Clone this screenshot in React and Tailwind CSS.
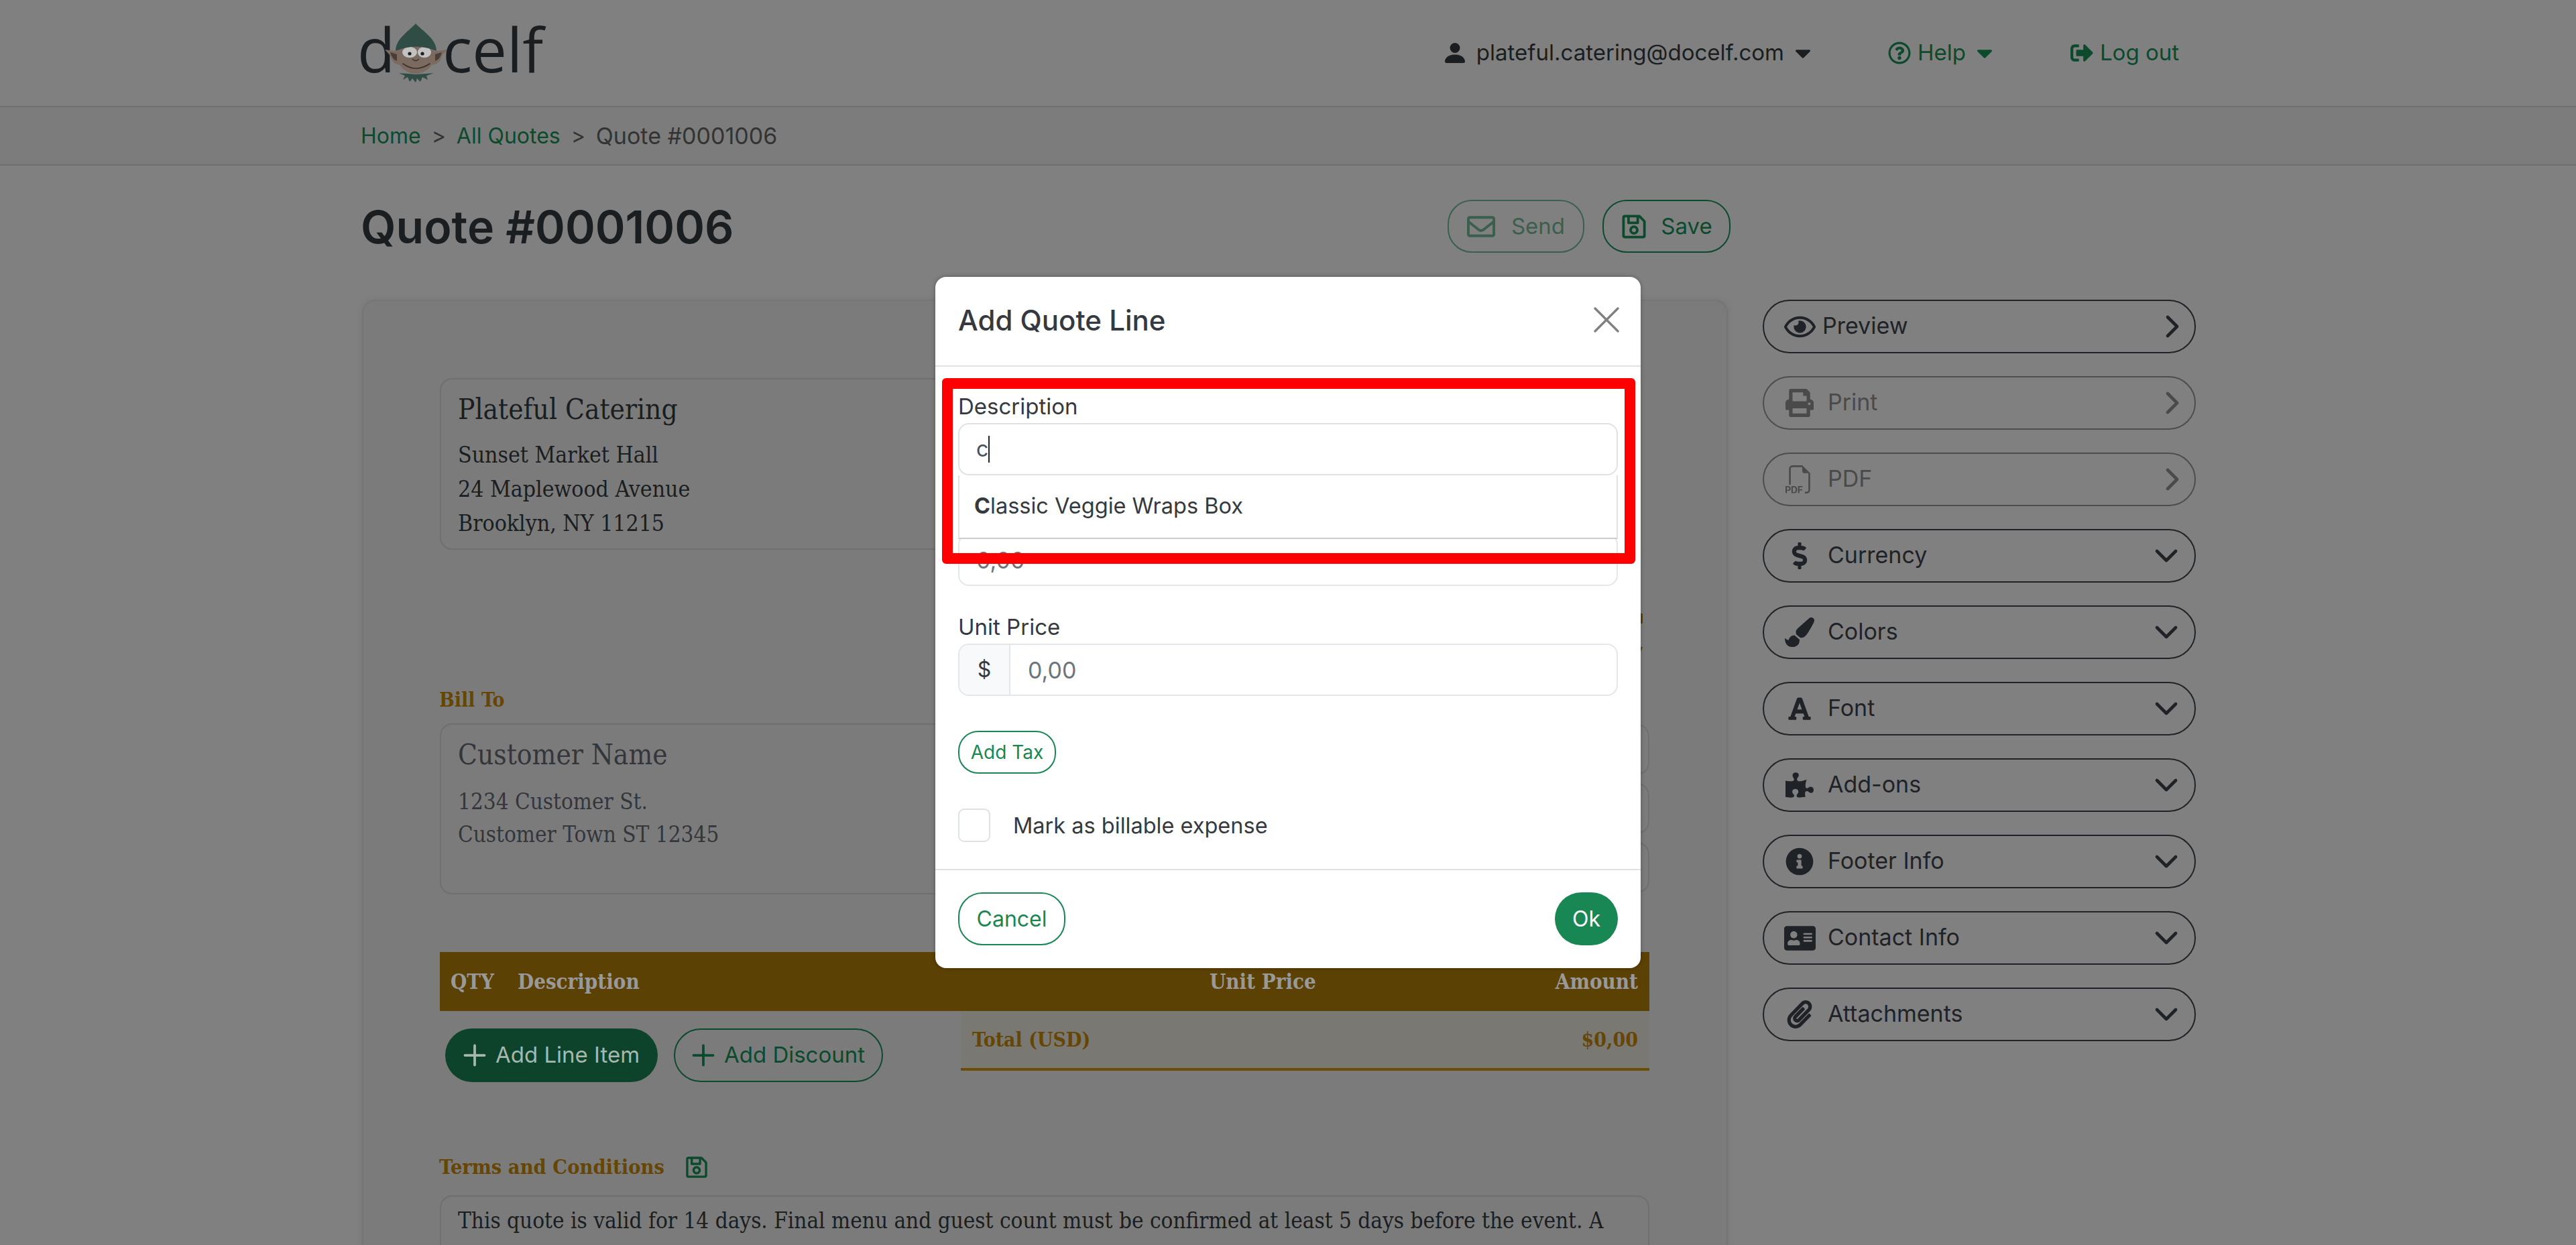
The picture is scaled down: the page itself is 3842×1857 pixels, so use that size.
import { FaCaretDown, FaDollarSign, FaFont, FaInfoCircle, FaPaintBrush, FaPaperclip, FaPrint, FaPuzzlePiece, FaAddressCard, FaRegEnvelope, FaRegEye, FaRegQuestionCircle, FaRegSave, FaSignOutAlt } from "react-icons/fa";
import { BsFiletypePdf, BsPersonFill } from "react-icons/bs";
import { ChevronDown, ChevronRight, Plus, X } from "lucide-react";

const serif = "font-['DejaVu_Serif_Condensed','DejaVu_Serif',serif]";

const sideItems = [
  { label: "Preview", icon: FaRegEye, size: 47, open: true, text: "ml-[4px]" },
  { label: "Print", icon: FaPrint, size: 42, open: true, muted: true },
  { label: "PDF", icon: BsFiletypePdf, size: 42, open: true, muted: true },
  { label: "Currency", icon: FaDollarSign, size: 40 },
  { label: "Colors", icon: FaPaintBrush, size: 44 },
  { label: "Font", icon: FaFont, size: 38 },
  { label: "Add-ons", icon: FaPuzzlePiece, size: 42 },
  { label: "Footer Info", icon: FaInfoCircle, size: 42 },
  { label: "Contact Info", icon: FaAddressCard, size: 47 },
  { label: "Attachments", icon: FaPaperclip, size: 42 },
];

const ElfLogo = () => (
  <div className="-mt-[12px] flex h-[92px] items-baseline font-['Open_Sans',sans-serif] text-[92px] leading-none text-[#1a1e21]">
    <span>d</span>
    <svg viewBox="0 0 93 88" className="-ml-[15px] -mr-[7px] mt-[8px] h-[88px] w-[93px] shrink-0 self-start">
      <path d="M0 39 L22 42 L22 62 Q10 60 8 48 Z" fill="#7a6a5f" />
      <path d="M8 43 L18 46 L18 56 Q11 54 8 43 Z" fill="#4a3d35" />
      <path d="M93 39 L71 42 L71 62 Q83 60 85 48 Z" fill="#7a6a5f" />
      <path d="M85 43 L75 46 L75 56 Q82 54 85 43 Z" fill="#4a3d35" />
      <polygon points="21,74 35,75 46,76 60,75 73,74 62,78 64,84 56,80 53,87 48,82 46,88 41,82 37,87 34,80 27,84 30,78" fill="#2f4d45" />
      <ellipse cx="46" cy="47" rx="28" ry="28" fill="#7a6a5f" />
      <ellipse cx="37" cy="43" rx="11" ry="8" fill="#c2c2c2" />
      <ellipse cx="59" cy="43" rx="10" ry="8" fill="#c2c2c2" />
      <circle cx="37" cy="45" r="2.6" fill="#1a1e21" />
      <circle cx="56" cy="45" r="2.6" fill="#1a1e21" />
      <path d="M41 53 Q46 58 51 53" stroke="#3a312c" strokeWidth="1.2" fill="none" />
      <path d="M27 60 Q46 74 67 60" stroke="#3a312c" strokeWidth="1.6" fill="none" strokeLinecap="round" />
      <path d="M46 0 C38 10 16 22 16 41 Q46 28 77 41 C77 22 54 10 46 0 Z" fill="#2f4d45" />
    </svg>
    <span>celf</span>
  </div>
);

const Header = () => (
  <header className="flex h-[160px] items-center justify-between border-b-2 border-[#6f6f6f] pl-[533px] pr-[592px]">
    <ElfLogo />
    <nav className="flex items-center text-[33px]">
      <div className="flex items-center text-[#1a1e21]">
        <BsPersonFill size={40} />
        <span className="ml-[12px]">plateful.catering@docelf.com</span>
        <FaCaretDown size={38} className="ml-[9px]" />
      </div>
      <div className="ml-[108px] flex items-center text-[#0c4a2e]">
        <FaRegQuestionCircle size={34} />
        <span className="ml-[10px]">Help</span>
        <FaCaretDown size={38} className="ml-[9px]" />
      </div>
      <div className="ml-[109px] flex items-center text-[#0c4a2e]">
        <FaSignOutAlt size={34} />
        <span className="ml-[10px]">Log out</span>
      </div>
    </nav>
  </header>
);

const Breadcrumb = () => (
  <div className="flex h-[87px] items-center gap-[16px] border-b-2 border-[#6f6f6f] bg-[#7c7c7c] pl-[538px] text-[32px]">
    <span className="text-[#0c4a2e]">Home</span>
    <span className="text-[#333333]">&gt;</span>
    <span className="text-[#0c4a2e]">All Quotes</span>
    <span className="text-[#333333]">&gt;</span>
    <span className="text-[34px] text-[#333333]">Quote #0001006</span>
  </div>
);

const TitleRow = () => (
  <div className="-mr-[4px] flex h-[79px] items-center justify-between">
    <h1 className="-ml-[2px] text-[68px] font-semibold text-[#1a1e21]">Quote #0001006</h1>
    <div className="flex gap-[27px]">
      <button className="flex h-[79px] w-[204px] items-center justify-center gap-[24px] rounded-[36px] border-2 border-[#0c4a2e] text-[33px] text-[#0c4a2e] opacity-60">
        <FaRegEnvelope size={42} />
        Send
      </button>
      <button className="flex h-[79px] w-[191px] items-center justify-center gap-[20px] rounded-[36px] border-2 border-[#0c4a2e] text-[33px] text-[#0c4a2e]">
        <FaRegSave size={40} />
        Save
      </button>
    </div>
  </div>
);

const QuoteCard = () => (
  <section className={`h-[1500px] rounded-[20px] border-2 border-[#757575] bg-[#7b7b7b] pl-[114px] pr-[115px] pt-[115px] shadow-[0_0_12px_rgba(0,0,0,0.08)] ${serif}`}>
    <div className="flex justify-between">
      <div className="h-[256px] w-[800px] rounded-[18px] border-2 border-[#6f6f6f] px-[25px] pt-[18px] text-[#1a1e21]">
        <div className="text-[42px] leading-[54px]">Plateful Catering</div>
        <div className="mt-[15px] text-[33.5px] leading-[51px]">
          <div>Sunset Market Hall</div>
          <div>24 Maplewood Avenue</div>
          <div>Brooklyn, NY 11215</div>
        </div>
      </div>
      <div className="h-[254px] w-[500px] border border-[#797979]" />
    </div>

    <div className="flex h-[203px] flex-col items-end pr-[10px] pt-[95px]">
      <div className="h-[15px] w-[14px] bg-[#5e4304]" />
      <div className="mt-[35px] h-[20px] w-[14px] bg-[#5e4304] [clip-path:polygon(0_0,100%_0,40%_100%,0_100%)]" />
    </div>

    <div className="-ml-px flex h-[40px] items-center text-[30px] font-bold text-[#664605]">Bill To</div>

    <div className="mt-[16px] flex justify-between">
      <div className="h-[255px] w-[800px] rounded-[18px] border-2 border-[#6f6f6f] px-[25px] pt-[18px] text-[#33363b]">
        <div className="text-[42px] leading-[54px]">Customer Name</div>
        <div className="mt-[18px] text-[33px] leading-[49px]">
          <div>1234 Customer St.</div>
          <div>Customer Town ST 12345</div>
        </div>
      </div>
      <div className="flex w-[500px] flex-col gap-[12px] pt-px">
        <div className="h-[76px] rounded-[18px] border-2 border-[#6f6f6f]" />
        <div className="h-[76px] rounded-[18px] border-2 border-[#6f6f6f]" />
        <div className="h-[76px] rounded-[18px] border-2 border-[#6f6f6f]" />
      </div>
    </div>

    <div className="mt-[86px] flex h-[88px] items-center justify-between bg-[#5c4104] pl-[16px] pr-[17px] text-[31px] font-bold text-[#999999]">
      <div className="flex gap-[35px]">
        <span>QTY</span>
        <span>Description</span>
      </div>
      <div className="flex gap-[357px]">
        <span>Unit Price</span>
        <span>Amount</span>
      </div>
    </div>

    <div className="flex h-[89px] items-start justify-between">
      <div className="ml-[8px] mt-[26px] flex gap-[24px] font-['Inter',sans-serif] text-[33px]">
        <button className="flex h-[80px] w-[317px] items-center justify-center gap-[6px] rounded-[40px] bg-[#0c432a] pr-[8px] text-[#a6b8ae]">
          <Plus size={50} strokeWidth={1.8} />
          Add Line Item
        </button>
        <button className="flex h-[80px] w-[312px] items-center justify-center gap-[6px] rounded-[40px] border-2 border-[#0c4a2e] pr-[8px] text-[#0c4a2e]">
          <Plus size={50} strokeWidth={1.8} />
          Add Discount
        </button>
      </div>
      <div className="flex h-[89px] w-[1027px] items-center justify-between border-b-4 border-[#6b4c05] bg-[#7a7872] px-[17px] text-[30px] font-bold text-[#664605]">
        <span>Total (USD)</span>
        <span>$0,00</span>
      </div>
    </div>

    <div className="-ml-px mt-[124px] flex h-[40px] items-center gap-[30px] text-[30.5px] font-bold text-[#664605]">
      Terms and Conditions
      <FaRegSave size={36} className="text-[#0c4a2e]" />
    </div>

    <div className="mt-[22px] h-[300px] rounded-[18px] border-2 border-[#6f6f6f] px-[25px] pt-[14px] text-[33px] leading-[44px] text-[#1a1e21]">
      This quote is valid for 14 days. Final menu and guest count must be confirmed at least 5 days before the event. A
    </div>
  </section>
);

const Sidebar = () => (
  <aside className="flex flex-col gap-[34px]">
    {sideItems.map((item) => {
      const Icon = item.icon;
      const Chevron = item.open ? ChevronRight : ChevronDown;
      return (
        <button
          key={item.label}
          className={`flex h-[80px] items-center rounded-[40px] border-2 pl-[23px] text-left text-[34px] ${
            item.muted ? "border-[#4d4d4d] text-[#4a4a4a]" : "border-[#1f2327] text-[#1f2327]"
          } ${item.open ? "pr-[5px]" : "pr-[14px]"}`}
        >
          <span className="flex w-[60px] justify-center">
            <Icon size={item.size} />
          </span>
          <span className={`flex-1 pb-[4px] ${item.text || "ml-[12px]"}`}>{item.label}</span>
          <Chevron size={56} strokeWidth={2} />
        </button>
      );
    })}
  </aside>
);

const AddLineModal = () => (
  <div className="absolute inset-0 flex justify-center pt-[413px]">
    <div className="h-[1031px] w-[1052px] rounded-[16px] bg-white text-[32px] text-[#343a40] shadow-[0_0_6px_rgba(0,0,0,0.3)]">
      <div className="flex h-[134px] items-center justify-between border-b-2 border-[#dee2e6] pb-[4px] pl-[34px] pr-[17px]">
        <h2 className="text-[42px] font-medium">Add Quote Line</h2>
        <X size={68} strokeWidth={1.2} className="text-[#808080]" />
      </div>

      <div className="h-[749px] px-[34px] pt-[39px]">
        <label className="block h-[40px] text-[33px] leading-[40px]">Description</label>
        <div className="relative mt-[5px]">
          <div className="flex h-[78px] items-center rounded-[16px] border-2 border-[#dde3e3] pl-[25px] text-[#495057]">
            c<span className="h-[40px] w-[2px] bg-[#212529]" />
          </div>
          <div className="absolute left-0 right-0 top-full z-10 flex h-[95px] items-center border-x-2 border-b-2 border-x-[#e2e2e2] border-b-[#cccccc] bg-white pl-[22px] text-[32.5px]">
            <b>C</b>lassic Veggie Wraps Box
          </div>
        </div>

        <div className="mt-[87px] flex h-[78px] items-center rounded-[16px] border-2 border-[#e3e6ea] pl-[25px] text-[34px] text-[#6c757d]">0,00</div>

        <label className="mt-[41px] block h-[40px] text-[33px] leading-[40px]">Unit Price</label>
        <div className="mt-[5px] flex h-[78px] overflow-hidden rounded-[16px] border-2 border-[#e3e6ea]">
          <span className="flex w-[76px] items-center justify-center border-r-2 border-[#e3e6ea] bg-[#f8f9fa]">$</span>
          <span className="flex items-center pl-[26px] text-[34px] text-[#6c757d]">0,00</span>
        </div>

        <button className="mt-[52px] flex h-[64px] w-[146px] items-center justify-center rounded-[30px] border-2 border-[#198754] text-[28px] text-[#198754]">
          Add Tax
        </button>

        <div className="mt-[52px] flex items-center gap-[34px] text-[32.5px]">
          <span className="h-[50px] w-[48px] rounded-[9px] border-2 border-[#dee2e6]" />
          <span className="pt-[2px]">Mark as billable expense</span>
        </div>
      </div>

      <div className="flex justify-between border-t-2 border-[#dee2e6] px-[34px] pt-[33px]">
        <button className="h-[79px] w-[160px] rounded-[36px] border-2 border-[#198754] text-[#198754]">Cancel</button>
        <button className="h-[79px] w-[94px] rounded-[40px] bg-[#198754] text-white">Ok</button>
      </div>
    </div>

    {/* red annotation around the autocomplete */}
    <div className="absolute left-[1405px] top-[564px] z-20 h-[277px] w-[1034px] rounded-[6px] border-[16px] border-[#ff0000]" />
  </div>
);

const App = () => {
  return (
    <div className="relative h-[1857px] overflow-hidden bg-[#808080] font-['Inter',sans-serif]">
      <Header />
      <Breadcrumb />
      <main className="ml-[540px] mt-[51px] grid w-[2735px] grid-cols-[2037px_646px] gap-x-[52px] gap-y-[70px]">
        <TitleRow />
        <div />
        <QuoteCard />
        <Sidebar />
      </main>
      <AddLineModal />
    </div>
  );
};

export default App;
